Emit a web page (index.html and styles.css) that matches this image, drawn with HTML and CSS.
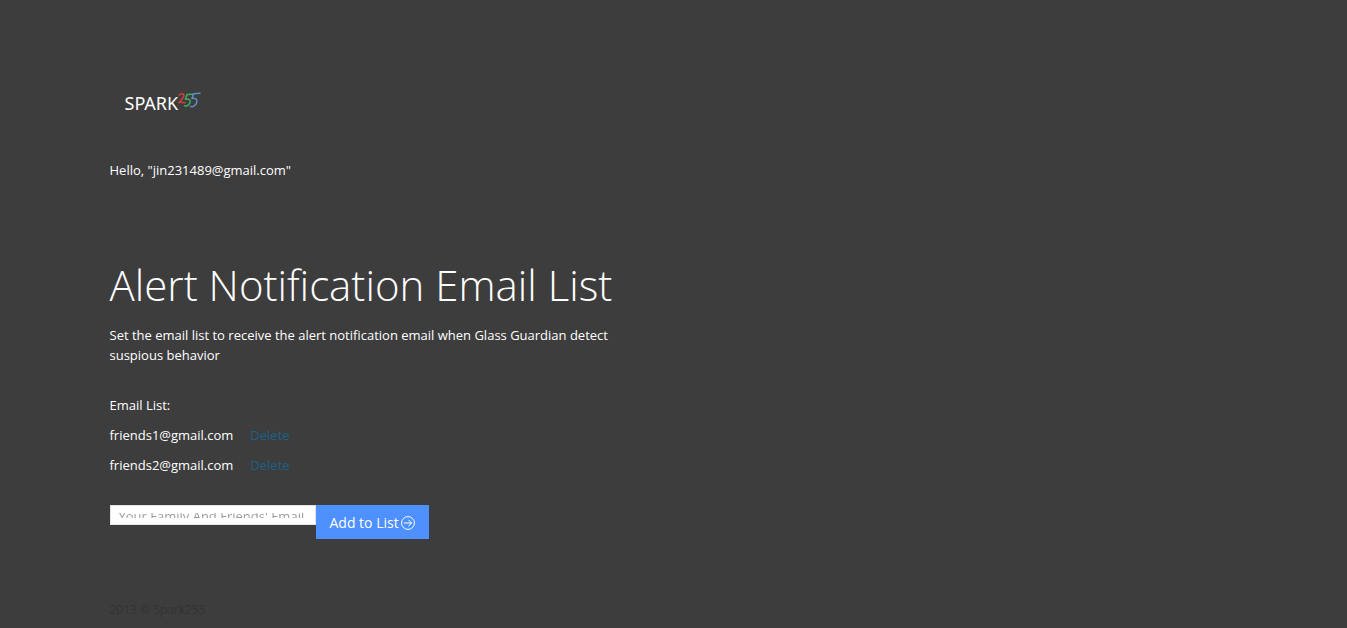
FILE: index.html
```html
<!DOCTYPE html>
<html lang="en">
<head>
<meta charset="utf-8">
<title>Alert Notification Email List</title>
<link rel="stylesheet" href="styles.css">
</head>
<body>
<div class="container">
  <header class="header">
    <a class="logo" href="#" aria-label="Spark255">
      <span class="logo-word">SPARK</span>
      <svg class="logo-mark" viewBox="0 0 24 18" width="24" height="18" fill="none" stroke-width="1.5" stroke-linecap="round" stroke-linejoin="round" aria-hidden="true">
        <path stroke="#d8403c" d="M1.2 3C2.6 1.6 5.8 1.2 6 3C6 5.4 3.4 8 1 10.5C3 10.2 5 10.4 7 10.8"/>
        <path stroke="#3cae60" d="M14.4 2.2L9 2.6L7.4 7.2C10.3 6.4 12.8 7.4 12.1 10.2C11.4 12.8 8.4 14.6 6.6 13.8"/>
        <path stroke="#5e8fc0" d="M22 1.2L15.6 1.8L14 6.6C17.2 5.8 19.6 7 18.9 10C18.2 13.2 14.6 15.6 12.4 14.4"/>
      </svg>
    </a>
    <p class="greeting">Hello, "jin231489@gmail.com"</p>
  </header>
  <main class="content">
    <h1 class="title">Alert Notification Email List</h1>
    <p class="intro">Set the email list to receive the alert notification email when Glass Guardian detect suspious behavior</p>
    <p class="list-label" id="list-label">Email List:</p>
    <ul class="emails" aria-labelledby="list-label">
      <li class="email"><span>friends1@gmail.com</span><a class="delete" href="#">Delete</a></li>
      <li class="email"><span>friends2@gmail.com</span><a class="delete" href="#">Delete</a></li>
    </ul>
    <form class="add-form">
      <input class="field" type="email" aria-label="Email address" placeholder="Your Family And Friends' Email">
      <button class="button" type="button">Add to List
        <svg viewBox="0 0 14 14" width="14" height="14" fill="none" stroke="currentColor" stroke-width="1" aria-hidden="true">
          <circle cx="7" cy="7" r="6.4"/>
          <path d="M3 7H10.6M7.4 3.8L10.6 7L7.4 10.2"/>
        </svg>
      </button>
    </form>
  </main>
  <footer class="footer">2013 © Spark255</footer>
</div>
</body>
</html>
```
FILE: styles.css
```css
* {
  box-sizing: border-box;
}

body {
  margin: 0;
  background: #3d3d3d;
  color: #fff;
  font: 13px/20px "Open Sans", "Noto Sans", sans-serif;
}

p, h1, ul {
  margin: 0;
}

.container {
  max-width: 1168px;
  margin: 0 auto;
  padding: 88px 20px 8px;
}

.logo {
  display: flex;
  align-items: flex-start;
  padding-left: 15px;
  color: #fff;
  text-decoration: none;
}

.logo-word {
  padding-top: 5px;
  font: 18px/20px "Noto Sans", sans-serif;
}

.logo-mark {
  margin-top: 4px;
}

.greeting {
  margin-top: 47px;
}

.content {
  max-width: 520px;
  margin-top: 80px;
}

.title {
  font-size: 42px;
  font-weight: 300;
  line-height: 50px;
  white-space: nowrap;
}

.intro {
  margin-top: 15px;
}

.list-label {
  margin-top: 30px;
}

.emails {
  padding: 0;
  list-style: none;
}

.email {
  display: flex;
  gap: 17px;
  margin-top: 10px;
}

.delete {
  color: #1b6088;
  text-decoration: none;
}

.add-form {
  display: flex;
  align-items: flex-start;
  margin-top: 30px;
}

.field {
  width: 206px;
  height: 20px;
  padding: 7px 8px 5px;
  border: 1px solid #e5e5e5;
  border-radius: 0;
  background: #fff;
  color: #555;
  font: 13px/20px "Open Sans", "Noto Sans", sans-serif;
}

/* Only the strip inside the field's padding shows the hint text. */
.field::placeholder {
  background: linear-gradient(transparent 6px, #999 6px, #999 11px, transparent 11px);
  background-clip: text;
  color: transparent;
}

.button {
  display: flex;
  align-items: center;
  gap: 2px;
  padding: 8px 14px 6px;
  border: 0;
  background: #4d90fe;
  color: #fff;
  font: 14px/20px "Open Sans", "Noto Sans", sans-serif;
}

.footer {
  margin-top: 61px;
  color: #333;
  font-size: 12px;
}
```
